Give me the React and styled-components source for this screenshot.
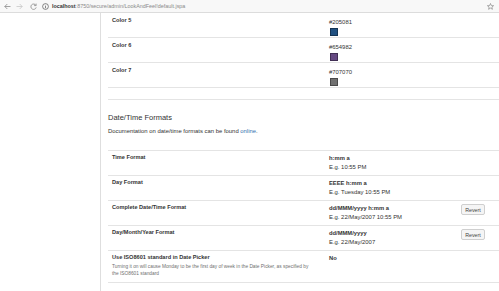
import React from "react";
import styled, { createGlobalStyle } from "styled-components";

const GlobalStyle = createGlobalStyle`
    html, body {
        margin: 0;
        padding: 0;
        background: #fff;
        font-family: "Liberation Sans", Arial, sans-serif;
        color: #333;
    }
`;

const Page = styled.div`
    width: 499px;
    height: 291px;
    overflow: hidden;
    display: flex;
    flex-direction: column;
`;

const BrowserBar = styled.div`
    height: 12px;
    flex: none;
    display: flex;
    align-items: center;
    gap: 5px;
    padding: 0 4px;
    background: #f8f8f8;
    border-bottom: 1px solid #dcdcdc;
`;

const NavIcon = styled.svg`
    width: 7px;
    height: 7px;
    flex: none;
    margin-right: ${props => props.$space || 0}px;
`;

const Url = styled.div`
    flex: 1;
    margin-left: -2px;
    font-size: 5.4px;
    color: #8a8a8a;
    white-space: nowrap;
    b {
        color: #333;
    }
`;

const Body = styled.div`
    flex: 1;
    display: flex;
    min-height: 0;
`;

const Sidebar = styled.div`
    width: 100px;
    flex: none;
    border-right: 1px solid #dedede;
`;

const Main = styled.div`
    flex: 1;
    padding-left: 7px;
    overflow: hidden;
`;

const Table = styled.div`
    border-top: ${props => (props.$bordered ? "1px solid #e4e4e4" : "none")};
`;

const Row = styled.div`
    display: grid;
    grid-template-columns: 221px 1fr auto;
    align-items: start;
    height: ${props => props.$height}px;
    box-sizing: border-box;
    padding-right: 14px;
    border-bottom: 1px solid #e4e4e4;
`;

const Label = styled.div`
    padding: ${props => props.$top}px 4px 0 4px;
    font-size: 5.6px;
    line-height: 7px;
    font-weight: bold;
    color: #333;
`;

const Description = styled.div`
    margin-top: 1.5px;
    font-size: 4.8px;
    line-height: 7.3px;
    font-weight: normal;
    color: #707070;
    padding-right: 16px;
`;

const Value = styled.div`
    padding-top: ${props => props.$top}px;
    display: flex;
    flex-direction: column;
    align-items: flex-start;
    gap: 2px;
    font-size: 5.9px;
    line-height: 7px;
    color: #333;
`;

const Format = styled.span`
    font-weight: bold;
    font-size: 5.8px;
`;

const Swatch = styled.span`
    display: block;
    width: 8px;
    height: 8px;
    margin-left: 1px;
    box-sizing: border-box;
    background: ${props => props.$color};
    border: 1px solid rgba(0, 0, 0, 0.35);
`;

const RevertButton = styled.button`
    margin-top: 3px;
    width: 24px;
    height: 11px;
    padding: 0;
    font-family: inherit;
    font-size: 5.3px;
    color: #444;
    background: #f5f5f5;
    border: 1px solid #cfcfcf;
    border-radius: 2px;
`;

const Separator = styled.div`
    margin-top: 11px;
    border-top: 1px solid #e4e4e4;
`;

const Heading = styled.h2`
    margin: 13px 0 0 0;
    font-size: 7.5px;
    line-height: 9px;
    font-weight: normal;
    color: #333;
`;

const Intro = styled.p`
    margin: 6px 0 15px 0;
    font-size: 5.9px;
    line-height: 7px;
    color: #333;
    a {
        color: #3572b0;
        text-decoration: none;
    }
`;

const colors = [
    { name: "Color 5", value: "#205081" },
    { name: "Color 6", value: "#654982" },
    { name: "Color 7", value: "#707070" }
];

const formats = [
    { name: "Time Format", format: "h:mm a", example: "E.g. 10:55 PM" },
    { name: "Day Format", format: "EEEE h:mm a", example: "E.g. Tuesday 10:55 PM" },
    { name: "Complete Date/Time Format", format: "dd/MMM/yyyy h:mm a", example: "E.g. 22/May/2007 10:55 PM", revert: true },
    { name: "Day/Month/Year Format", format: "dd/MMM/yyyy", example: "E.g. 22/May/2007", revert: true }
];

const App = () => (
    <Page>
        <GlobalStyle />
        <BrowserBar>
            <NavIcon viewBox="0 0 7 7" fill="none" stroke="#8a8a8a" strokeWidth="0.8">
                <path d="M6.5 3.5H0.8M3.3 1L0.8 3.5L3.3 6" />
            </NavIcon>
            <NavIcon viewBox="0 0 7 7" fill="none" stroke="#c8c8c8" strokeWidth="0.8" $space={2}>
                <path d="M0.5 3.5H6.2M3.7 1L6.2 3.5L3.7 6" />
            </NavIcon>
            <NavIcon viewBox="0 0 7 7" fill="none" stroke="#8a8a8a" strokeWidth="0.8">
                <path d="M5.9 2.3A2.7 2.7 0 1 0 6.2 4.4" />
                <path d="M6.1 0.6V2.6H4.1" />
            </NavIcon>
            <NavIcon viewBox="0 0 7 7" fill="none" stroke="#555" strokeWidth="0.7">
                <circle cx="3.5" cy="3.5" r="2.9" />
                <path d="M3.5 3V5.2M3.5 1.9V2.4" />
            </NavIcon>
            <Url>
                <b>localhost</b>:8750/secure/admin/LookAndFeel!default.jspa
            </Url>
            <NavIcon viewBox="0 0 7 7" fill="none" stroke="#777" strokeWidth="0.6" $space={1}>
                <path d="M3.5 0.5L4.4 2.6L6.6 2.7L4.9 4.1L5.4 6.3L3.5 5.1L1.6 6.3L2.1 4.1L0.4 2.7L2.6 2.6Z" />
            </NavIcon>
        </BrowserBar>
        <Body>
            <Sidebar />
            <Main>
                <Table>
                    {colors.map(color => (
                        <Row key={color.name} $height={25}>
                            <Label $top={4}>{color.name}</Label>
                            <Value $top={5.5}>
                                <span>{color.value}</span>
                                <Swatch $color={color.value} />
                            </Value>
                        </Row>
                    ))}
                </Table>
                <Separator />
                <Heading>Date/Time Formats</Heading>
                <Intro>
                    Documentation on date/time formats can be found <a href="#online">online</a>.
                </Intro>
                <Table $bordered>
                    {formats.map(item => (
                        <Row key={item.name} $height={25}>
                            <Label $top={3}>{item.name}</Label>
                            <Value $top={4}>
                                <Format>{item.format}</Format>
                                <span>{item.example}</span>
                            </Value>
                            {item.revert && <RevertButton>Revert</RevertButton>}
                        </Row>
                    ))}
                    <Row $height={32}>
                        <Label $top={3}>
                            Use ISO8601 standard in Date Picker
                            <Description>
                                Turning it on will cause Monday to be the first day of week in the Date Picker, as specified by the ISO8601 standard
                            </Description>
                        </Label>
                        <Value $top={4}>
                            <Format>No</Format>
                        </Value>
                    </Row>
                </Table>
            </Main>
        </Body>
    </Page>
);

export default App;
